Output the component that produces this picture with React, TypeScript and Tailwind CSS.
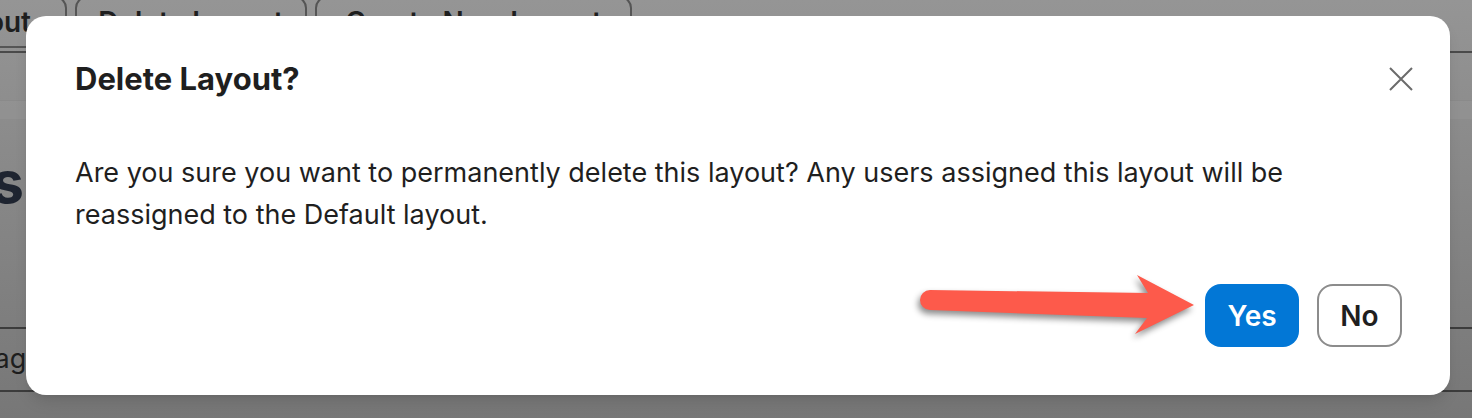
import React from 'react';

const font = { fontFamily: 'Inter, "Noto Sans", sans-serif' };

const Backdrop: React.FC = () => (
  <div className="absolute inset-0 flex flex-col bg-gradient-to-b from-[#959595] to-[#777777]">
    {/* toolbar behind the dialog */}
    <div className="h-[53px] border-b-2 border-[#4a4a4a] flex items-start gap-[8px] ml-[-200px]">
      <div className="mt-[-4px] h-[52px] w-[267px] pr-[34px] rounded-xl border-2 border-[#555] text-[28px] font-semibold text-[#1e1e1e] flex items-center justify-end">
        Layout
      </div>
      <div className="mt-[-4px] h-[52px] w-[232px] rounded-xl border-2 border-[#555] text-[28px] font-semibold text-[#1e1e1e] flex items-center justify-center">
        Delete Layout
      </div>
      <div className="mt-[-4px] h-[52px] w-[317px] rounded-xl border-2 border-[#555] text-[28px] font-semibold text-[#1e1e1e] flex items-center justify-center">
        Create New Layout
      </div>
    </div>
    <div className="h-[48px] border-b border-[#8a8a8a]" />
    <div className="h-[18px] bg-[#999999]/40" />
    <div className="h-[108px] flex items-start pt-[34px]">
      <div className="w-[24px] overflow-hidden flex justify-end">
        <span className="whitespace-nowrap text-[58px] font-bold leading-none text-[#1e2430]">Layouts</span>
      </div>
    </div>
    <div className="h-[102px] border-b-2 border-[#3c3c3c]" />
    <div className="h-[63px] border-b-2 border-[#3c3c3c] flex items-center">
      <div className="w-[42px] overflow-hidden flex justify-end">
        <span className="whitespace-nowrap text-[27px] text-[#1e1e1e]">Usage</span>
      </div>
    </div>
  </div>
);

const Arrow: React.FC = () => (
  <svg
    className="absolute left-0 top-0 pointer-events-none"
    width={1472}
    height={418}
    style={{ filter: 'drop-shadow(-2px 4px 3px rgba(0,0,0,0.45))' }}
  >
    <path
      d="M930 290 L1148 293 L1137 275 L1194 305 L1135 334 L1147 318 L930 310 A10 10 0 0 1 930 290 Z"
      fill="#fd5a4b"
    />
  </svg>
);

export default function App() {
  return (
    <div className="relative w-[1472px] h-[418px] overflow-hidden" style={font}>
      <Backdrop />

      {/* dialog */}
      <div className="absolute left-[26px] top-[16px] w-[1424px] h-[379px] bg-white rounded-[20px] shadow-lg flex flex-col pl-[49px] pr-[36px]">
        <div className="flex items-center justify-between h-[128px] pb-[2px]">
          <h2 className="text-[31px] font-bold text-[#1f1f1f]">Delete Layout?</h2>
          <button className="w-[26px] h-[26px] flex items-center justify-center">
            <svg width="24" height="24" viewBox="0 0 24 24">
              <path d="M1 1 L23 23 M23 1 L1 23" stroke="#6b6b6b" strokeWidth="2" />
            </svg>
          </button>
        </div>
        <p className="text-[27px] leading-[42px] text-[#1f1f1f] mt-[8px]">
          Are you sure you want to permanently delete this layout? Any users assigned this layout will be
          <br />
          reassigned to the Default layout.
        </p>
        <div className="flex justify-end gap-[18px] mt-[48px] pr-[12px]">
          <button className="w-[94px] h-[63px] rounded-[16px] bg-[#0277d6] text-white text-[28px] font-semibold">
            Yes
          </button>
          <button className="w-[85px] h-[63px] rounded-[16px] border-2 border-[#8c8c8c] bg-white text-[#1f1f1f] text-[28px] font-semibold">
            No
          </button>
        </div>
      </div>

      <Arrow />
    </div>
  );
}
